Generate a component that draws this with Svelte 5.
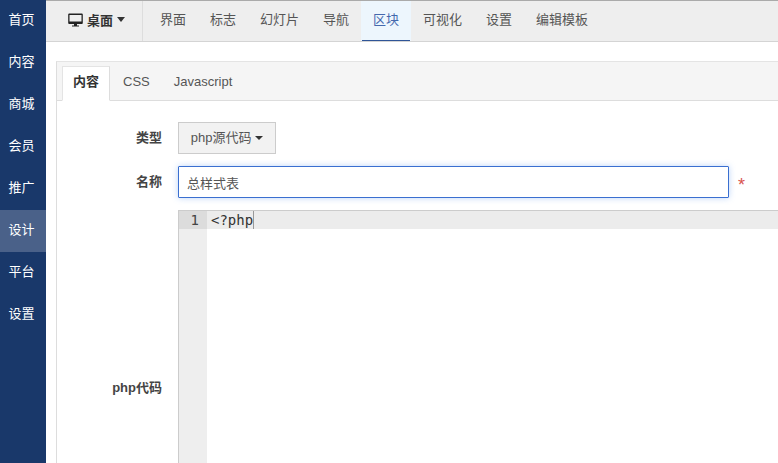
<script lang="ts">
	const sideItems = ['首页', '内容', '商城', '会员', '推广', '设计', '平台', '设置'];
	const navItems = ['界面', '标志', '幻灯片', '导航', '区块', '可视化', '设置', '编辑模板'];
	const tabs = ['内容', 'CSS', 'Javascript'];
</script>

<div class="layout">
	<aside class="sidebar">
		{#each sideItems as item}
			<a class="side-item" class:active={item === '设计'}>{item}</a>
		{/each}
	</aside>

	<main class="main">
		<header class="topbar">
			<div class="device">
				<svg class="monitor" width="15" height="14" viewBox="0 0 15 14">
					<path d="M1.2 0.5h12.6a1 1 0 0 1 1 1v8.5a1 1 0 0 1-1 1H1.2a1 1 0 0 1-1-1V1.500a1 1 0 0 1 1-1zM1.500 2v6.500h12V2z" fill="#222" fill-rule="evenodd" />
					<path d="M6 11h3v1.500h2V13.500H4v-1h2z" fill="#222" />
				</svg>
				<span class="device-label">桌面</span>
				<span class="caret dark"></span>
			</div>
			<nav class="nav">
				{#each navItems as item}
					<a class="nav-item" class:active={item === '区块'}>{item}</a>
				{/each}
			</nav>
		</header>

		<section class="panel">
			<div class="tabs">
				{#each tabs as tab, i}
					<a class="tab" class:active={i === 0}>{tab}</a>
				{/each}
			</div>

			<div class="form">
				<div class="label">类型</div>
				<div class="field">
					<button class="type-btn">php源代码 <span class="caret"></span></button>
				</div>

				<div class="label">名称</div>
				<div class="field name-field">
					<input class="name-input" value="总样式表" />
					<span class="required">*</span>
				</div>

				<div class="label strong">php代码</div>
				<div class="editor">
					<div class="gutter">
						<div class="line-no">1</div>
					</div>
					<div class="code">
						<div class="code-line"><span>&lt;?php</span><i class="cursor"></i></div>
					</div>
				</div>
			</div>
		</section>
	</main>
</div>

<style>
	:global(body) {
		overflow: hidden;
		background: #fff;
	}

	.layout {
		display: flex;
		height: 463px;
		overflow: hidden;
		font-family: "Liberation Sans", "Noto Sans CJK SC", sans-serif;
		font-size: 13px;
		color: #555;
	}

	.sidebar {
		flex: 0 0 46px;
		display: flex;
		flex-direction: column;
		background: #19386a;
	}

	.side-item {
		height: 42px;
		line-height: 40px;
		padding-right: 3px;
		text-align: center;
		color: #fff;
		font-size: 13px;
	}

	.side-item.active {
		background: #4a6189;
	}

	.main {
		flex: 1;
		min-width: 0;
		display: flex;
		flex-direction: column;
	}

	.topbar {
		flex: 0 0 42px;
		box-sizing: border-box;
		display: flex;
		background: #eee;
		border-top: 1px solid #aaa;
		border-bottom: 1px solid #d4d4d4;
	}

	.device {
		box-sizing: border-box;
		width: 97px;
		display: flex;
		align-items: center;
		padding-left: 22px;
		padding-bottom: 3px;
		border-right: 1px solid #ddd;
		color: #333;
		font-weight: bold;
	}

	.monitor {
		margin-right: 4px;
	}

	.caret {
		display: inline-block;
		width: 0;
		height: 0;
		vertical-align: middle;
		border-top: 4px solid #333;
		border-left: 4px solid transparent;
		border-right: 4px solid transparent;
	}

	.caret.dark {
		margin-left: 4px;
		border-top-width: 5px;
		border-left-width: 4.5px;
		border-right-width: 4.5px;
	}

	.nav {
		display: flex;
		padding-left: 5px;
	}

	.nav-item {
		position: relative;
		padding: 0 12px;
		line-height: 38px;
		color: #555;
	}

	.nav-item.active {
		background: #edf6fd;
		color: #4468ad;
	}

	.nav-item.active::after {
		content: '';
		position: absolute;
		left: 1px;
		right: 1px;
		bottom: 0;
		height: 1px;
		background: #2f5597;
	}

	.panel {
		flex: 1;
		min-height: 0;
		margin: 19px 0 0 10px;
		border-left: 1px solid #ddd;
		border-top: 1px solid #e4e4e4;
	}

	.tabs {
		box-sizing: border-box;
		height: 39px;
		display: flex;
		align-items: flex-end;
		padding-left: 5px;
		background: #f5f5f5;
		border-bottom: 1px solid #ddd;
	}

	.tab {
		box-sizing: border-box;
		height: 35px;
		line-height: 29px;
		padding: 0 11px;
		margin-bottom: -1px;
		border: 1px solid transparent;
		color: #555;
	}

	.tab.active {
		padding: 0 10px;
		margin-right: 1px;
		background: #fff;
		color: #333;
		font-weight: bold;
		border-color: #e4e4e4 #ddd #fff #e4e4e4;
	}

	.form {
		display: grid;
		grid-template-columns: 105px 1fr;
		column-gap: 16px;
		row-gap: 12px;
		padding-top: 21px;
	}

	.label {
		align-self: center;
		padding-bottom: 4px;
		text-align: right;
		font-weight: bold;
		color: #444;
	}

	.field {
		display: flex;
		align-items: center;
	}

	.type-btn {
		box-sizing: border-box;
		width: 98px;
		height: 32px;
		padding: 0 0 4px;
		background: #f2f2f2;
		border: 1px solid #ccc;
		color: #555;
		font: inherit;
	}

	.name-field {
		gap: 9px;
	}

	.name-input {
		box-sizing: border-box;
		width: 551px;
		height: 32px;
		padding: 0 8px;
		border: 1px solid #3a6fd0;
		border-radius: 1px;
		box-shadow: 0 0 6px rgba(90, 150, 240, 0.4);
		font: inherit;
		color: #555;
		outline: none;
	}

	.required {
		color: #d9534f;
		font-size: 18px;
		line-height: 1;
		margin-top: 6px;
	}

	.editor {
		height: 356px;
		display: flex;
		border-top: 1px solid #ccc;
		border-left: 1px solid #ccc;
		font-family: "DejaVu Sans Mono", monospace;
		font-size: 14px;
		color: #333;
	}

	.gutter {
		flex: 0 0 28px;
		background: #eee;
	}

	.line-no {
		height: 18px;
		line-height: 18px;
		padding-right: 8px;
		text-align: right;
		background: #dcdcdc;
		color: #444;
	}

	.code {
		flex: 1;
	}

	.code-line {
		height: 18px;
		line-height: 18px;
		padding-left: 4px;
		background: #ececec;
		display: flex;
	}

	.cursor {
		width: 1px;
		background: #999;
	}
</style>
